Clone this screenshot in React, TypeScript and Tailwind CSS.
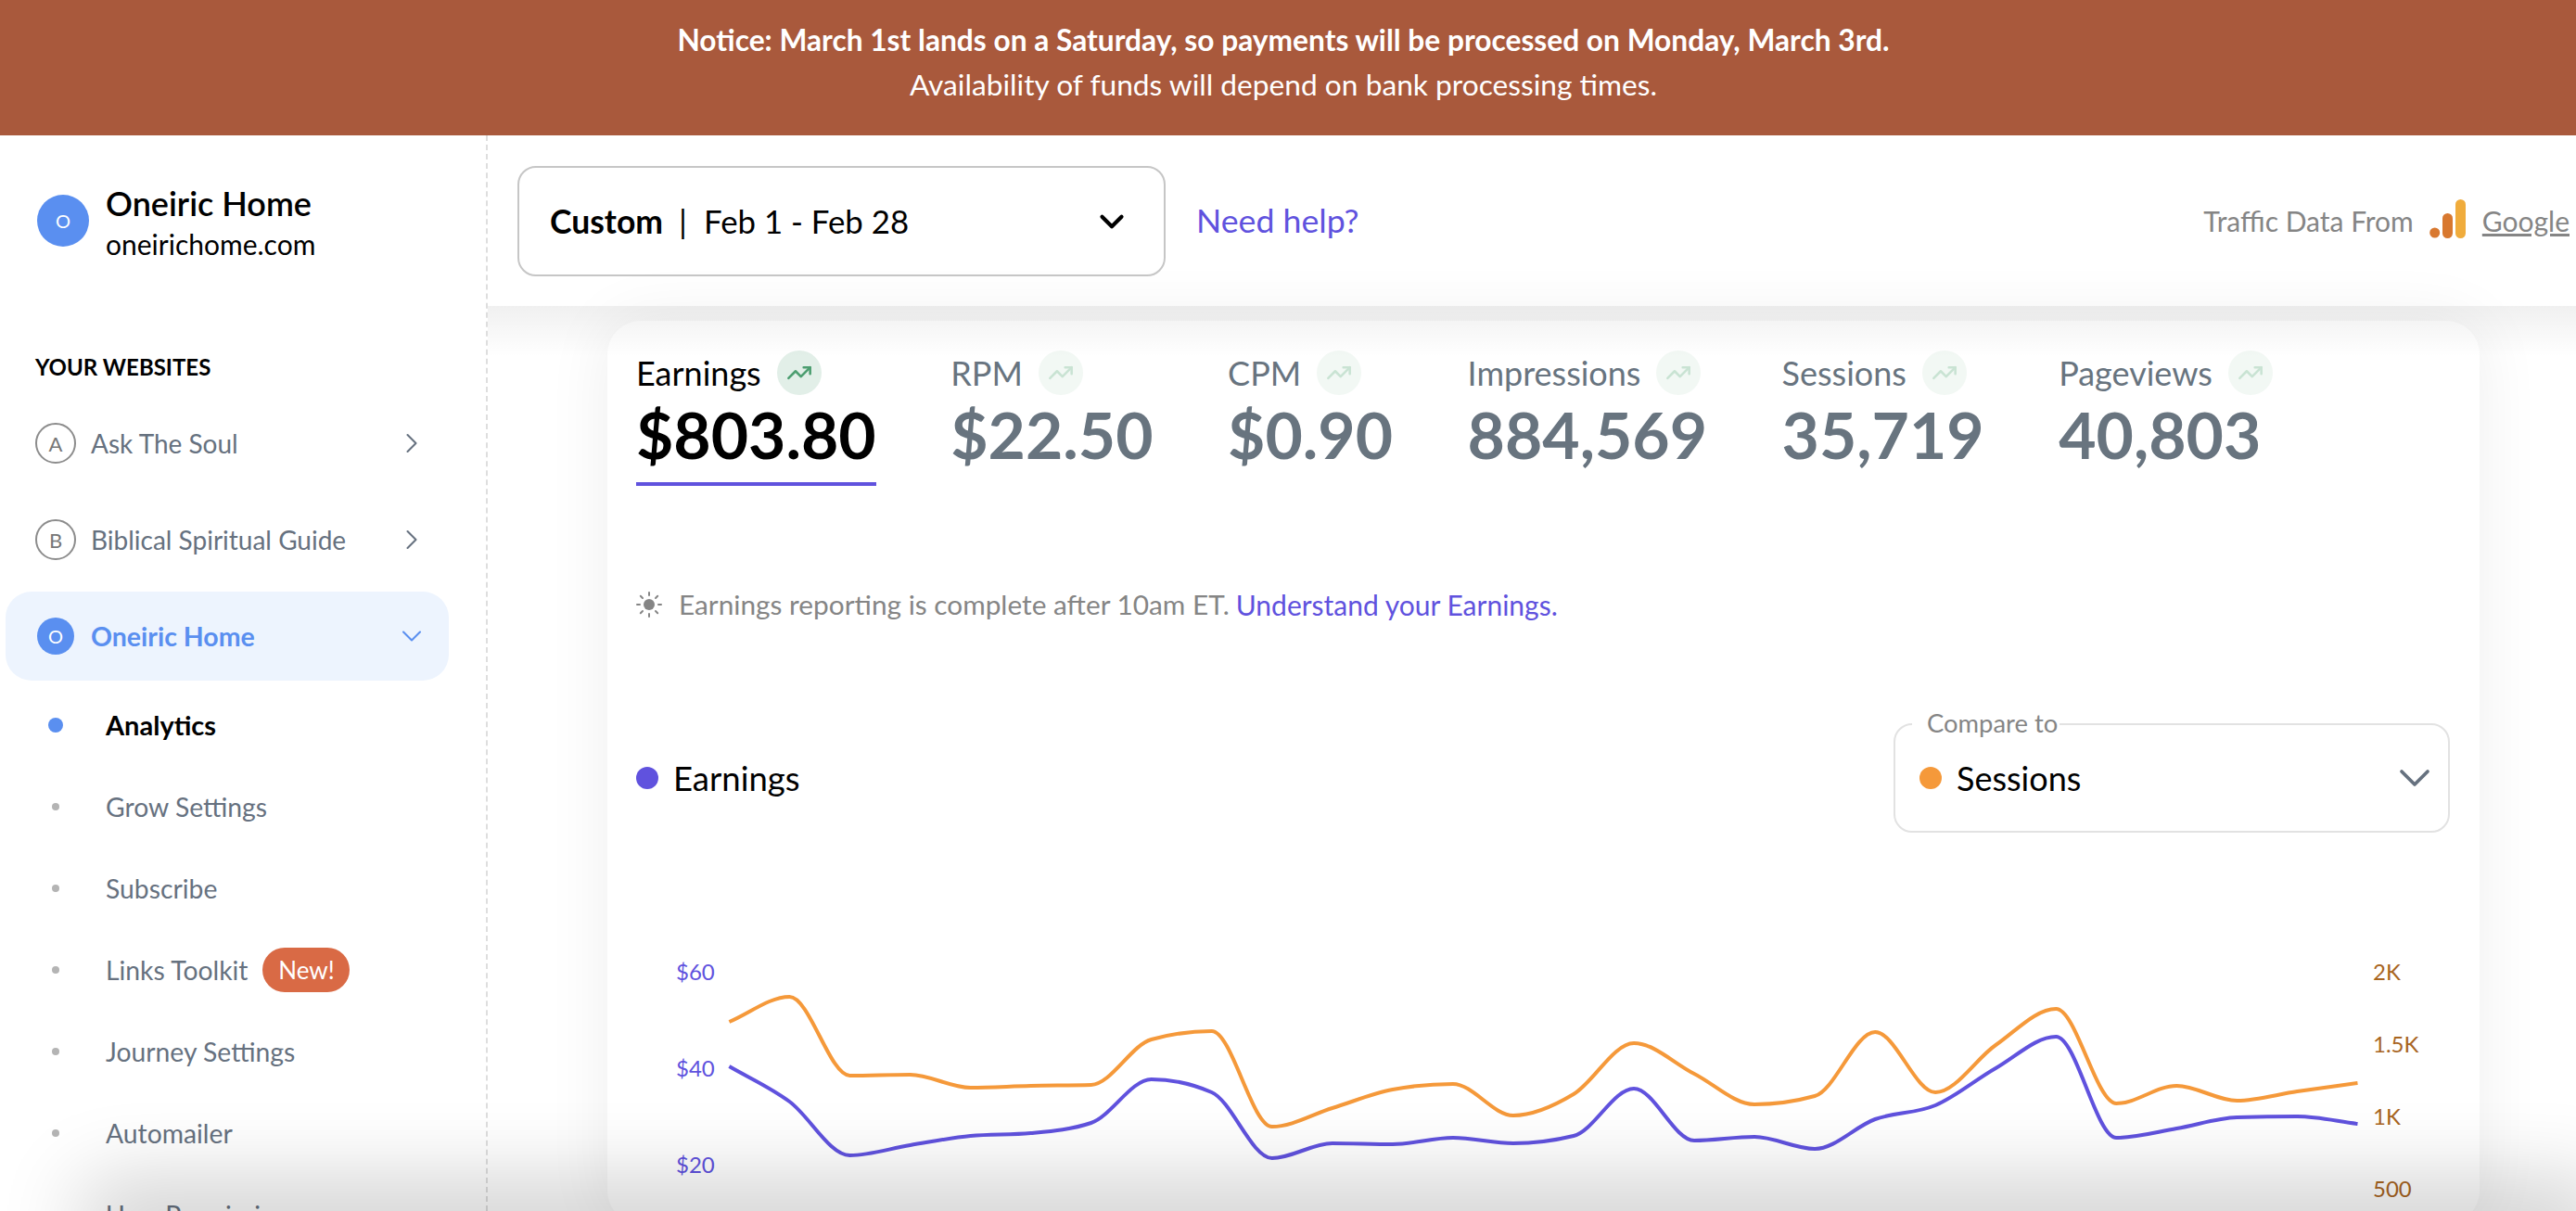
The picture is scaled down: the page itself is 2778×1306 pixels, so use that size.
import { ReactElement } from "react";
import { ChevronDown, ChevronRight, TrendingUp } from "lucide-react";

const earnings = [1150, 1188, 1246, 1235, 1225, 1222, 1211, 1164, 1178, 1249, 1233, 1234, 1227, 1233, 1225, 1174, 1230, 1226, 1239, 1207, 1192, 1152, 1118, 1227, 1217, 1205, 1204, 1212];
const sessions = [1102, 1075, 1160, 1159, 1173, 1171, 1170, 1121, 1112, 1215, 1195, 1175, 1169, 1203, 1180, 1125, 1158, 1191, 1182, 1113, 1178, 1127, 1088, 1190, 1171, 1187, 1177, 1168];

// monotone cubic through the daily points, svg starts at x=686 y=1020
const linePath = (values: number[]): string => {
    const step = 65.04;
    const pts = values.map((v, i) => [100.4 + i * step, v - 1020]);
    const slopes = pts.slice(1).map((p, i) => (p[1] - pts[i][1]) / step);
    const tangents = pts.map((_, i) => {
        if (i === 0) return slopes[0];
        if (i === pts.length - 1) return slopes[i - 1];
        const a = slopes[i - 1];
        const b = slopes[i];
        if (a * b <= 0) return 0;
        return Math.sign(a) * 2 * Math.min(Math.abs(a), Math.abs(b), Math.abs(a + b) / 4);
    });
    let d = `M${pts[0][0]} ${pts[0][1]}`;
    for (let i = 1; i < pts.length; i++) {
        const h = step / 3;
        d += ` C${pts[i - 1][0] + h} ${pts[i - 1][1] + tangents[i - 1] * h} ${pts[i][0] - h} ${pts[i][1] - tangents[i] * h} ${pts[i][0]} ${pts[i][1]}`;
    }
    return d;
};

const Trend = ({ active }: { active?: boolean }): ReactElement => (
    <span className={`flex h-12 w-12 items-center justify-center rounded-full ${active ? "bg-[#e2efe8]" : "bg-[#f2f8f4]"}`}>
        <TrendingUp size={28} strokeWidth={2.2} className={active ? "text-[#4c9e70]" : "text-[#c9e3d3]"} />
    </span>
);

const Tab = ({ label, value, active }: { label: string; value: string; active?: boolean }): ReactElement => (
    <div className={`flex flex-col border-b-4 ${active ? "border-[#6052de]" : "border-transparent"}`}>
        <div className="flex h-12 items-center gap-[17px]">
            <span className={`text-[36px] leading-[48px] ${active ? "text-black" : "text-[#68747f]"}`}>{label}</span>
            <Trend active={active} />
        </div>
        <div className={`h-[94px] text-[69.6px] font-bold leading-[84px] ${active ? "text-black" : "text-[#68747f]"}`}>{value}</div>
    </div>
);

const Site = ({ letter, name }: { letter: string; name: string }): ReactElement => (
    <div className="flex h-[104px] items-center pl-[38px] pr-[62px] text-[#66717f]">
        <span className="flex h-[44px] w-[44px] items-center justify-center rounded-full border-2 border-[#8c8c8c] text-[22px] text-[#777]">{letter}</span>
        <span className="ml-[16px] text-[28px]">{name}</span>
        <ChevronRight size={36} strokeWidth={1.4} className="ml-auto" />
    </div>
);

const SubItem = ({ label, badge, active }: { label: string; badge?: string; active?: boolean }): ReactElement => (
    <div className="flex h-[88px] items-center">
        <span className="ml-[52px] mr-[46px] flex w-[16px] justify-center">
            <span className={`rounded-full ${active ? "h-4 w-4 bg-[#5a8ff0]" : "h-2 w-2 bg-[#b4b4b4]"}`} />
        </span>
        <span className={active ? "text-[29px] font-bold text-black" : "text-[28.3px] text-[#66717f]"}>{label}</span>
        {badge && <span className="ml-[16px] flex h-[48px] w-[94px] items-center justify-center rounded-[24px] bg-[#d96a45] text-[26px] text-white">{badge}</span>}
    </div>
);

const Sidebar = (): ReactElement => (
    <aside className="w-[526px] shrink-0 border-r-2 border-dashed border-[#dedede] bg-white">
        <div className="flex items-start pl-[40px] pt-[51px]">
            <span className="mt-[13px] flex h-14 w-14 items-center justify-center rounded-full bg-[#5a8ff0] text-[20px] text-white">O</span>
            <div className="ml-[18px]">
                <div className="text-[36px] font-semibold leading-[44px] text-black">Oneiric Home</div>
                <div className="text-[30px] leading-[44px] text-black">oneirichome.com</div>
            </div>
        </div>
        <div className="mt-[96px] pl-[38px] text-[24px] font-bold leading-[30px] text-black">YOUR WEBSITES</div>
        <div className="mt-[15px]">
            <Site letter="A" name="Ask The Soul" />
            <Site letter="B" name="Biblical Spiritual Guide" />
        </div>
        <div className="ml-[6px] mt-[4px] flex h-[96px] w-[478px] items-center rounded-[28px] bg-[#edf4fe] pl-[34px] pr-[22px] text-[#5a8ff0]">
            <span className="flex h-10 w-10 items-center justify-center rounded-full bg-[#5a8ff0] text-[20px] text-white">O</span>
            <span className="ml-[18px] text-[28.5px] font-bold">Oneiric Home</span>
            <ChevronDown size={36} strokeWidth={1.4} className="ml-auto" />
        </div>
        <div className="mt-[4px]">
            <SubItem label="Analytics" active />
            <SubItem label="Grow Settings" />
            <SubItem label="Subscribe" />
            <SubItem label="Links Toolkit" badge="New!" />
            <SubItem label="Journey Settings" />
            <SubItem label="Automailer" />
            <SubItem label="User Permissions" />
        </div>
    </aside>
);

const TopBar = (): ReactElement => (
    <div className="flex h-[184px] items-center bg-white pl-[32px] pr-[7px]">
        <div className="flex h-[119px] w-[699px] items-center rounded-[20px] border-2 border-[#c6c6c6] pl-[33px] pr-[35px] pt-[2px] text-[35.5px] text-black">
            <span className="font-bold">Custom</span>
            <span className="ml-[17px]">|</span>
            <span className="ml-[18px] text-[34.8px]">Feb 1 - Feb 28</span>
            <ChevronDown size={42} strokeWidth={2.4} className="ml-auto" />
        </div>
        <span className="ml-[33px] text-[35.7px] text-[#6052de]">Need help?</span>
        <div className="ml-auto flex items-center text-[30px] text-[#858585]">
            <span>Traffic Data From</span>
            <svg width="40" height="42" viewBox="0 0 40 42" className="mb-[4px] ml-[17px]">
                <circle cx="5.7" cy="36" r="5.5" fill="#d8782f" />
                <rect x="14" y="15" width="11" height="27" rx="5.5" fill="#d8782f" />
                <rect x="28" y="0" width="11" height="42" rx="5.5" fill="#f0ac3c" />
            </svg>
            <span className="ml-[17px] underline">Google</span>
        </div>
    </div>
);

const SunIcon = (): ReactElement => (
    <svg width="28" height="28" viewBox="0 0 28 28" className="text-[#858585]" fill="none" stroke="currentColor" strokeWidth="2" strokeLinecap="round">
        <circle cx="14" cy="14" r="6" fill="currentColor" stroke="none" />
        <path d="M14 1v3M14 24v3M1 14h3M24 14h3M4.8 4.8l2.2 2.2M21 21l2.2 2.2M4.8 23.2L7 21M21 7l2.2-2.2" />
    </svg>
);

const Chart = (): ReactElement => (
    <svg width="1960" height="300" viewBox="0 0 1960 300" className="mt-[122px] block">
        <g className="fill-[#6052de] text-[24px]" dominantBaseline="central">
            <text x="43" y="27">$60</text>
            <text x="43" y="131">$40</text>
            <text x="43" y="235">$20</text>
        </g>
        <g className="fill-[#a8651f] text-[24px]" dominantBaseline="central">
            <text x="1873" y="27">2K</text>
            <text x="1873" y="105">1.5K</text>
            <text x="1873" y="183">1K</text>
            <text x="1873" y="261">500</text>
        </g>
        <path d={linePath(sessions)} fill="none" stroke="#f5993a" strokeWidth="4" />
        <path d={linePath(earnings)} fill="none" stroke="#6052de" strokeWidth="4" />
    </svg>
);

const Card = (): ReactElement => (
    <div className="ml-[129px] mt-[16px] w-[2019px] rounded-[36px] bg-white pl-[31px] pt-[32px] shadow-[0_0_70px_rgba(0,0,0,0.07)]">
        <div className="flex gap-[80.5px]">
            <Tab label="Earnings" value="$803.80" active />
            <Tab label="RPM" value="$22.50" />
            <Tab label="CPM" value="$0.90" />
            <Tab label="Impressions" value="884,569" />
            <Tab label="Sessions" value="35,719" />
            <Tab label="Pageviews" value="40,803" />
        </div>
        <div className="mt-[108px] flex h-10 items-center text-[29.8px] text-[#858585]">
            <SunIcon />
            <span className="ml-[18px]">Earnings reporting is complete after 10am ET.</span>
            <span className="ml-[7px] text-[30px] text-[#6052de]">Understand your Earnings.</span>
        </div>
        <div className="mt-[108px] flex h-[118px] items-center pr-[32px]">
            <span className="h-6 w-6 rounded-full bg-[#6052de]" />
            <span className="ml-[16px] text-[36.5px] text-black">Earnings</span>
            <div className="relative ml-auto flex h-[118px] w-[600px] items-center rounded-[20px] border-2 border-[#e2e2e2] pl-[26px] pr-[8px]">
                <span className="absolute left-[18px] top-[-18px] bg-white pl-[16px] pr-[2px] text-[27.4px] leading-[32px] text-[#858585]">Compare to</span>
                <span className="h-6 w-6 rounded-full bg-[#f5993a]" />
                <span className="ml-[16px] text-[36px] text-black">Sessions</span>
                <ChevronDown size={56} strokeWidth={1.6} className="ml-auto text-[#66717f]" />
            </div>
        </div>
        <Chart />
    </div>
);

export default function App(): ReactElement {
    return (
        <div className="relative flex h-[1306px] w-[2778px] flex-col overflow-hidden bg-white font-['Lato',sans-serif]">
            <div className="flex h-[146px] shrink-0 flex-col items-center justify-center bg-[#a9593c] pb-[12px] pr-[10px] text-[31.7px] leading-[48px] text-white">
                <div className="font-bold">Notice: March 1st lands on a Saturday, so payments will be processed on Monday, March 3rd.</div>
                <div>Availability of funds will depend on bank processing times.</div>
            </div>
            <div className="flex min-h-0 flex-1">
                <Sidebar />
                <main className="relative min-w-0 flex-1">
                    <TopBar />
                    <Card />
                    <div className="pointer-events-none absolute left-0 right-0 top-[184px] h-[55px] bg-gradient-to-b from-[#0000000f] to-transparent" />
                </main>
            </div>
            <div className="pointer-events-none absolute bottom-[-30px] left-[120px] right-0 h-[30px] shadow-[0_0_90px_30px_rgba(0,0,0,0.2)]" />
        </div>
    );
}
